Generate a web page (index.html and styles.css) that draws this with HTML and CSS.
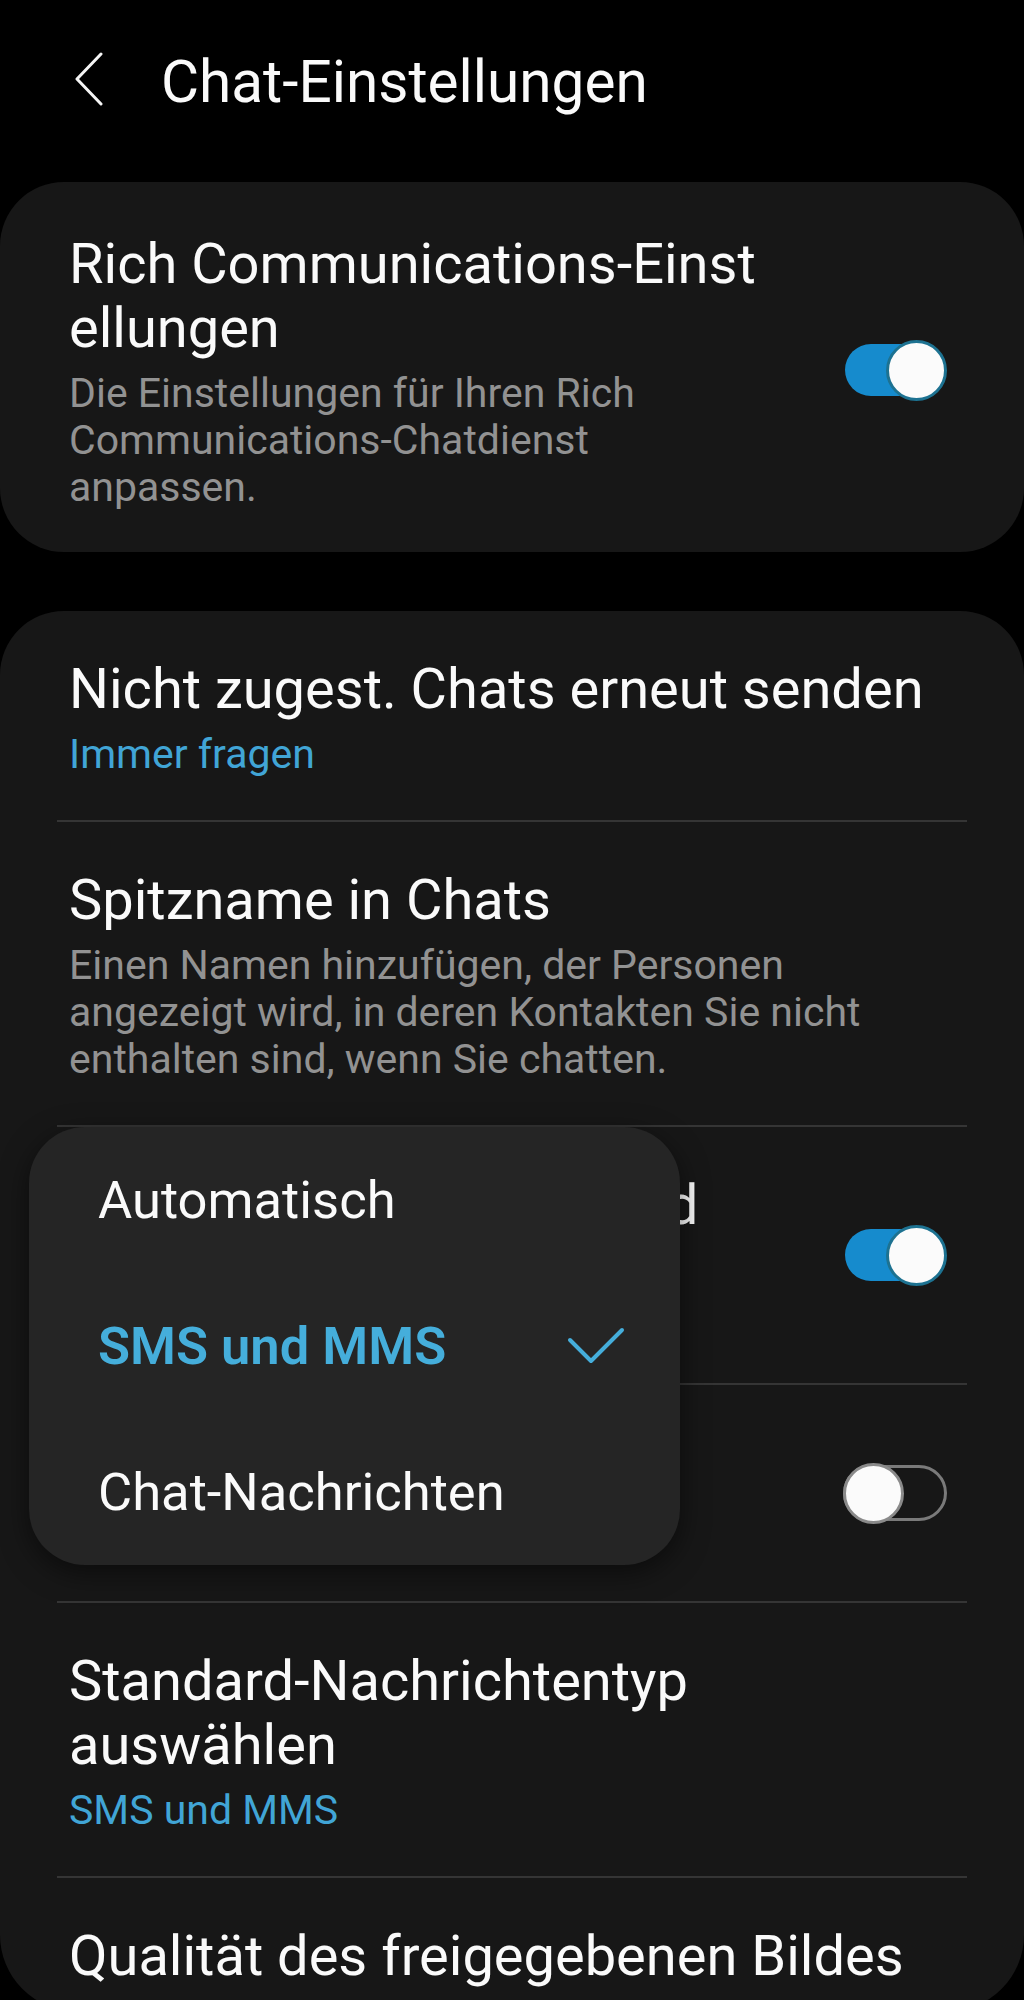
FILE: index.html
```html
<!DOCTYPE html>
<html lang="de">
<head>
  <meta charset="UTF-8">
  <title>Chat-Einstellungen</title>
  <meta name="viewport" content="width=device-width, initial-scale=1.0">
  <link rel="stylesheet" href="styles.css">
</head>
<body>
  <div class="screen">
    <header class="topbar">
      <svg class="back" width="30" height="54" viewBox="0 0 30 54">
        <polyline points="27,2 3,27 27,52" fill="none" stroke="#f5f5f5" stroke-width="3" stroke-linecap="round" stroke-linejoin="round"/>
      </svg>
      <h1 class="page-title">Chat-Einstellungen</h1>
    </header>

    <section class="card card-single">
      <div class="item">
        <div class="item-text">
          <div class="item-title">Rich Communications-Einst<br>ellungen</div>
          <div class="item-sub">Die Einstellungen für Ihren Rich<br>Communications-Chatdienst<br>anpassen.</div>
        </div>
        <div class="switch on"><span class="track"></span><span class="knob"></span></div>
      </div>
    </section>

    <section class="card card-list">
      <div class="item">
        <div class="item-text">
          <div class="item-title">Nicht zugest. Chats erneut senden</div>
          <div class="item-sub accent">Immer fragen</div>
        </div>
      </div>
      <div class="item">
        <div class="item-text">
          <div class="item-title">Spitzname in Chats</div>
          <div class="item-sub">Einen Namen hinzufügen, der Personen<br>angezeigt wird, in deren Kontakten Sie nicht<br>enthalten sind, wenn Sie chatten.</div>
        </div>
      </div>
      <div class="item">
        <div class="item-text">
          <div class="item-title">Automatischer Download</div>
          <div class="item-sub">Dateien über Mobilfunk<br>automatisch laden</div>
        </div>
        <div class="switch on"><span class="track"></span><span class="knob"></span></div>
      </div>
      <div class="item">
        <div class="item-text">
          <div class="item-title">Beim Roaming<br>herunterladen</div>
        </div>
        <div class="switch"><span class="track"></span><span class="knob"></span></div>
      </div>
      <div class="item">
        <div class="item-text">
          <div class="item-title">Standard-Nachrichtentyp<br>auswählen</div>
          <div class="item-sub accent">SMS und MMS</div>
        </div>
      </div>
      <div class="item">
        <div class="item-text">
          <div class="item-title">Qualität des freigegebenen Bildes</div>
          <div class="item-sub accent">Optimiert</div>
        </div>
      </div>
    </section>

    <div class="popup">
      <div class="popup-item">Automatisch</div>
      <div class="popup-item selected">
        <span>SMS und MMS</span>
        <svg class="check" width="58" height="38" viewBox="0 0 58 38">
          <polyline points="3,13 24,34 55,3" fill="none" stroke="#45aedb" stroke-width="4" stroke-linecap="round" stroke-linejoin="round"/>
        </svg>
      </div>
      <div class="popup-item">Chat-Nachrichten</div>
    </div>
  </div>
</body>
</html>
```

FILE: styles.css
```css
* {
  box-sizing: border-box;
}

html,
body {
  margin: 0;
  padding: 0;
  background: #000;
}

body {
  font-family: Roboto, "Noto Sans", "Liberation Sans", sans-serif;
  color: #fafafa;
}

.screen {
  position: relative;
  width: 1024px;
  height: 2000px;
  overflow: hidden;
}

/* top bar */
.topbar {
  display: flex;
  align-items: center;
  height: 70px;
  margin: 47px 0 65px;
  padding-left: 74px;
}

.back {
  flex: none;
  margin-top: -6px;
}

.page-title {
  margin: 0 0 0 57px;
  font-size: 58.5px;
  font-weight: 400;
  line-height: 70px;
}

/* cards */
.card {
  background: #171717;
  border-radius: 64px;
  padding: 0 57px;
}

.card-single {
  margin-bottom: 59px;
}

.card-single .item {
  padding-top: 50px;
  padding-bottom: 41px;
}

.card-list {
  height: 1400px;
  overflow: hidden;
  border-radius: 64px 64px 76px 76px;
}

.item {
  display: flex;
  align-items: center;
  gap: 30px;
  padding: 46px 20px 42px 12px;
}

.item + .item {
  border-top: 2px solid #353535;
}

.item-text {
  flex: 1;
  min-width: 0;
}

.item-title {
  font-size: 56px;
  line-height: 64px;
  white-space: nowrap;
}

.item-sub {
  margin-top: 10px;
  font-size: 41px;
  line-height: 47px;
  color: #929292;
  white-space: nowrap;
}

.item-sub.accent {
  color: #41a5d6;
}

/* toggle */
.switch {
  position: relative;
  flex: none;
  width: 104px;
  height: 60px;
  margin-top: -4px;
}

.switch .track {
  position: absolute;
  left: 0;
  top: 2px;
  width: 104px;
  height: 56px;
  border-radius: 28px;
  border: 3px solid #7a7a7a;
}

.switch .knob {
  position: absolute;
  left: 0;
  top: 0;
  width: 61px;
  height: 61px;
  border-radius: 50%;
  background: #fbfbfb;
  border: 3px solid #8a8a8a;
}

.switch.on .track {
  left: 2px;
  top: 4px;
  width: 98px;
  height: 52px;
  border: none;
  background: #168bcd;
}

.switch.on .knob {
  left: auto;
  right: 0;
  border-color: #1d7291;
}

/* dropdown popup */
.popup {
  position: absolute;
  left: 29px;
  top: 1127px;
  width: 651px;
  background: #252525;
  border-radius: 56px;
  box-shadow: 0 8px 28px rgba(0, 0, 0, 0.5);
}

.popup-item {
  display: flex;
  align-items: center;
  justify-content: space-between;
  height: 146px;
  padding: 0 55px 0 69px;
  font-size: 52.5px;
}

.popup-item.selected {
  color: #45aedb;
  font-weight: 600;
}

.check {
  flex: none;
}
```
